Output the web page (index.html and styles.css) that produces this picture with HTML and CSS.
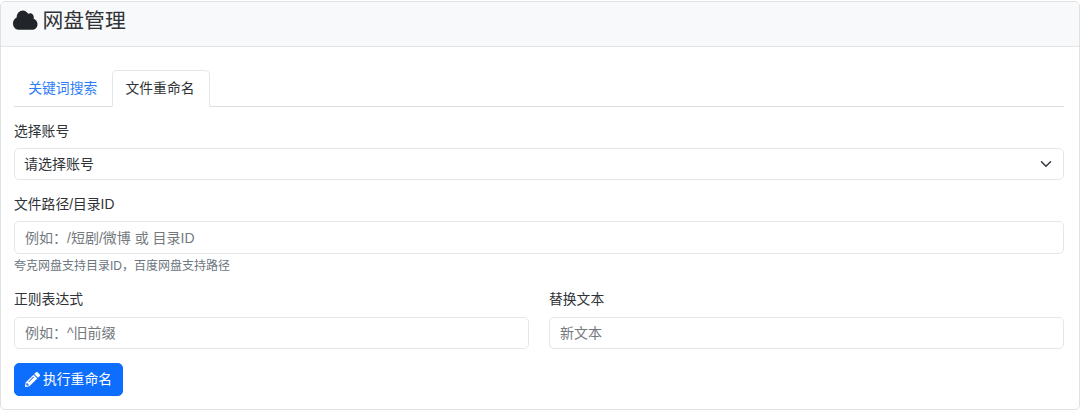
FILE: index.html
```html
<!DOCTYPE html>
<html lang="zh-CN">

<head>
    <meta charset="UTF-8">
    <title>网盘管理</title>
    <link rel="stylesheet" href="styles.css">
</head>

<body>
    <div class="card">
        <div class="card-header">
            <h2>
                <svg class="icon-cloud" viewBox="0 0 640 512" preserveAspectRatio="none" aria-hidden="true">
                    <path d="M537.6 226.6c4.1-10.7 6.4-22.4 6.4-34.6 0-53-43-96-96-96-19.7 0-38.1 6-53.3 16.2C367 64.2 315.3 32 256 32c-88.4 0-160 71.6-160 160 0 2.7.1 5.4.2 8.1C40.2 219.8 0 273.2 0 336c0 79.5 64.5 144 144 144h368c70.7 0 128-57.3 128-128 0-61.9-44-113.6-102.4-125.4z"/>
                </svg>
                网盘管理
            </h2>
        </div>

        <div class="card-body">
            <ul class="tabs">
                <li class="tab">关键词搜索</li>
                <li class="tab active">文件重命名</li>
            </ul>

            <form>
                <div class="field">
                    <label for="account">选择账号</label>
                    <select id="account" class="control">
                        <option>请选择账号</option>
                    </select>
                </div>

                <div class="field">
                    <label for="path">文件路径/目录ID</label>
                    <input id="path" class="control" type="text" placeholder="例如：/短剧/微博 或 目录ID">
                    <div class="form-text">夸克网盘支持目录ID，百度网盘支持路径</div>
                </div>

                <div class="row">
                    <div class="field">
                        <label for="pattern">正则表达式</label>
                        <input id="pattern" class="control short" type="text" placeholder="例如：^旧前缀">
                    </div>
                    <div class="field">
                        <label for="replace">替换文本</label>
                        <input id="replace" class="control short" type="text" placeholder="新文本">
                    </div>
                </div>

                <button class="btn-primary" type="button">
                    <svg class="icon-pencil" viewBox="0 0 512 512" aria-hidden="true">
                        <path d="M497.9 142.1l-46.1 46.1c-4.7 4.7-12.3 4.7-17 0l-111-111c-4.7-4.7-4.7-12.3 0-17l46.1-46.1c18.7-18.7 49.1-18.7 67.9 0l60.1 60.1c18.8 18.7 18.8 49.1 0 67.9zM284.2 99.8L21.6 362.4.4 483.9c-2.9 16.4 11.4 30.6 27.8 27.8l121.5-21.3 262.6-262.6c4.7-4.7 4.7-12.3 0-17l-111-111c-4.8-4.7-12.4-4.7-17.1 0zM124.1 339.9c-5.5-5.5-5.5-14.3 0-19.8l154-154c5.5-5.5 14.3-5.5 19.8 0s5.5 14.3 0 19.8l-154 154c-5.5 5.5-14.3 5.5-19.8 0zM88 424h48v36.3l-64.5 11.3-31.1-31.1L51.7 376H88v48z"/>
                    </svg>
                    <span>执行重命名</span>
                </button>
            </form>
        </div>
    </div>
</body>

</html>
```

FILE: styles.css
```css
* {
    margin: 0;
    padding: 0;
    box-sizing: border-box;
}

body {
    background: #fff;
    color: #2f3337;
    font-family: "Liberation Sans", "Noto Sans CJK SC", sans-serif;
    font-size: 13.8px;
    line-height: 21px;
    padding-top: 1px;
}

.card {
    border: 1px solid #e0e1e2;
    border-radius: 5px;
    height: 409px;
    overflow: hidden;
}

.card-header {
    background: #f8f9fa;
    border-bottom: 1px solid #e3e4e5;
    height: 45px;
    padding: 3px 12px 0;
}

.card-header h2 {
    font-size: 20.8px;
    font-weight: 400;
    line-height: 32px;
    display: flex;
    align-items: center;
    gap: 5px;
}

.icon-cloud {
    width: 24.5px;
    height: 22px;
    fill: #212529;
    margin-top: -2px;
}

.card-body {
    padding: 23px 15px 0 13px;
}

.tabs {
    list-style: none;
    display: flex;
    height: 37px;
    border-bottom: 1px solid #dcdee0;
    margin-bottom: 14px;
}

.tab {
    width: 97.5px;
    height: 37px;
    padding-top: 7px;
    text-align: center;
    color: #2b7cf6;
    border: 1px solid transparent;
    border-radius: 5px 5px 0 0;
}

.tab.active {
    width: 98px;
    padding-right: 1px;
    color: #2f3337;
    background: #fff;
    border-color: #e3e5e7 #e3e5e7 #fff;
}

.field {
    margin-bottom: 14px;
}

label {
    display: block;
    margin-bottom: 6px;
    height: 21px;
}

.control {
    display: block;
    width: 100%;
    height: 33px;
    border: 1px solid #e4e6e8;
    border-radius: 5px;
    padding: 0 10px;
    background: #fff;
    color: #2f3337;
    font: inherit;
    font-size: 14px;
    outline: none;
}

.control.short {
    height: 32px;
}

.control::placeholder {
    color: #74797e;
    opacity: 1;
}

select.control {
    height: 32px;
    padding: 0 9px;
    appearance: none;
    background-image: url("data:image/svg+xml,%3csvg xmlns='http://www.w3.org/2000/svg' viewBox='0 0 16 16'%3e%3cpath fill='none' stroke='%23343a40' stroke-linecap='round' stroke-linejoin='round' stroke-width='2' d='m2 5 6 6 6-6'/%3e%3c/svg%3e");
    background-repeat: no-repeat;
    background-position: right 11px center;
    background-size: 12px 12px;
}

.form-text {
    color: #6c757d;
    font-size: 12px;
    line-height: 18px;
    margin-top: 3px;
}

.row {
    display: grid;
    grid-template-columns: 514.5px 1fr;
    gap: 20.5px;
}

.row label {
    margin-bottom: 7px;
}

.btn-primary {
    display: flex;
    align-items: center;
    gap: 3px;
    width: 108.5px;
    height: 33px;
    padding-left: 10px;
    background: #0d6efd;
    color: #fff;
    border: 1px solid #0d6efd;
    border-radius: 5px;
    font: inherit;
    cursor: pointer;
}

.icon-pencil {
    width: 15px;
    height: 15px;
    fill: #fff;
}
```
